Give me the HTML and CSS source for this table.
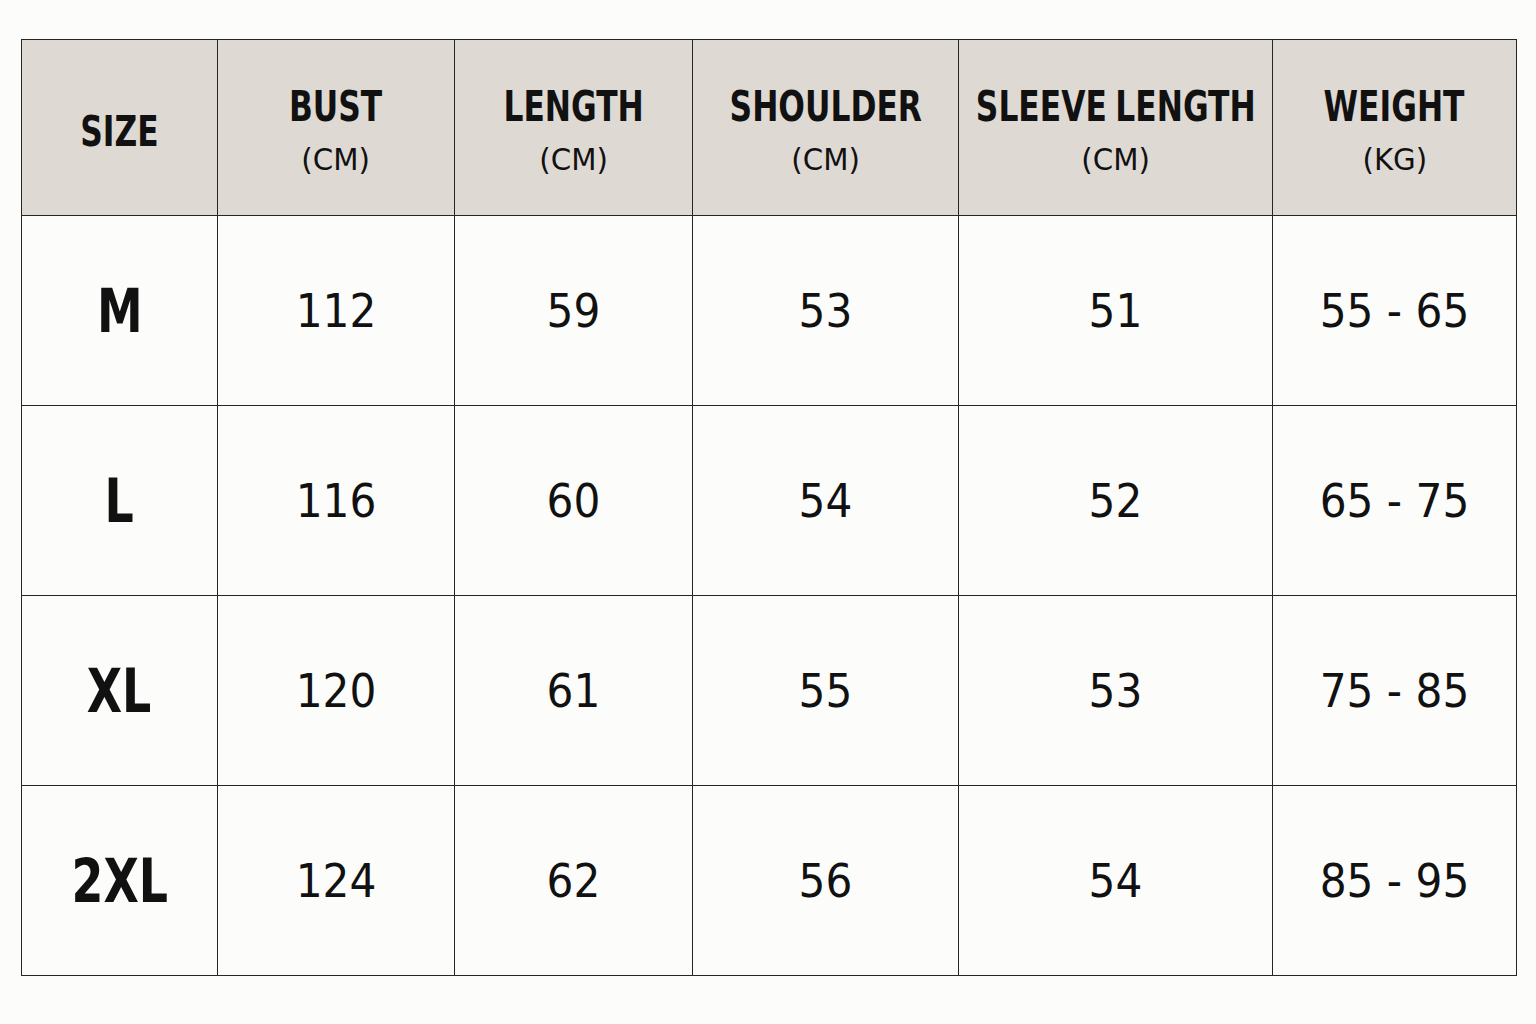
FILE: index.html
```html
<!DOCTYPE html>
<html>
<head>
<meta charset="utf-8">
<link rel="stylesheet" href="styles.css">
</head>
<body>
<table class="chart">
  <colgroup>
    <col class="c1"><col class="c2"><col class="c3"><col class="c4"><col class="c5"><col class="c6">
  </colgroup>
  <thead>
    <tr>
      <th><div class="hd"><span class="t">SIZE</span></div></th>
      <th><div class="hd"><span class="t">BUST</span><span class="u">(CM)</span></div></th>
      <th><div class="hd"><span class="t">LENGTH</span><span class="u">(CM)</span></div></th>
      <th><div class="hd"><span class="t">SHOULDER</span><span class="u">(CM)</span></div></th>
      <th><div class="hd"><span class="t">SLEEVE LENGTH</span><span class="u">(CM)</span></div></th>
      <th><div class="hd"><span class="t">WEIGHT</span><span class="u">(KG)</span></div></th>
    </tr>
  </thead>
  <tbody>
    <tr><td><span class="sz">M</span></td><td>112</td><td>59</td><td>53</td><td>51</td><td>55 - 65</td></tr>
    <tr><td><span class="sz">L</span></td><td>116</td><td>60</td><td>54</td><td>52</td><td>65 - 75</td></tr>
    <tr><td><span class="sz">XL</span></td><td>120</td><td>61</td><td>55</td><td>53</td><td>75 - 85</td></tr>
    <tr><td><span class="sz">2XL</span></td><td>124</td><td>62</td><td>56</td><td>54</td><td>85 - 95</td></tr>
  </tbody>
</table>
</body>
</html>
```
FILE: styles.css
```css
html, body {
  margin: 0;
  padding: 0;
  background: #fcfcfb;
}
body {
  padding: 39px 0 0 21px;
  font-family: "DejaVu Sans Condensed", "DejaVu Sans", sans-serif;
  color: #111;
}
.chart {
  border-collapse: collapse;
  table-layout: fixed;
  width: 1495px;
}
.c1 { width: 196px; }
.c2 { width: 237px; }
.c3 { width: 238px; }
.c4 { width: 266px; }
.c5 { width: 314px; }
.c6 { width: 244px; }
.chart th, .chart td {
  border: 1.5px solid #262626;
  text-align: center;
  vertical-align: middle;
  padding: 0;
}
.chart thead th {
  background: #dfd9d4;
  height: 175px;
}
.hd {
  display: flex;
  flex-direction: column;
  align-items: center;
  padding-top: 6px;
}
.chart tbody td {
  height: 189px;
  font-size: 47px;
  font-weight: 400;
  background: #fcfcfb;
}
.t {
  display: inline-block;
  white-space: nowrap;
  font-size: 43px;
  font-weight: 700;
  line-height: 46px;
  word-spacing: -3px;
  transform: scaleX(0.81);
}
.u {
  display: inline-block;
  font-size: 31px;
  font-weight: 400;
  line-height: 40px;
  margin-top: 10px;
  transform: scaleX(1.05);
}
.sz {
  display: inline-block;
  font-size: 60px;
  font-weight: 700;
  transform: scaleX(0.85);
}
```
